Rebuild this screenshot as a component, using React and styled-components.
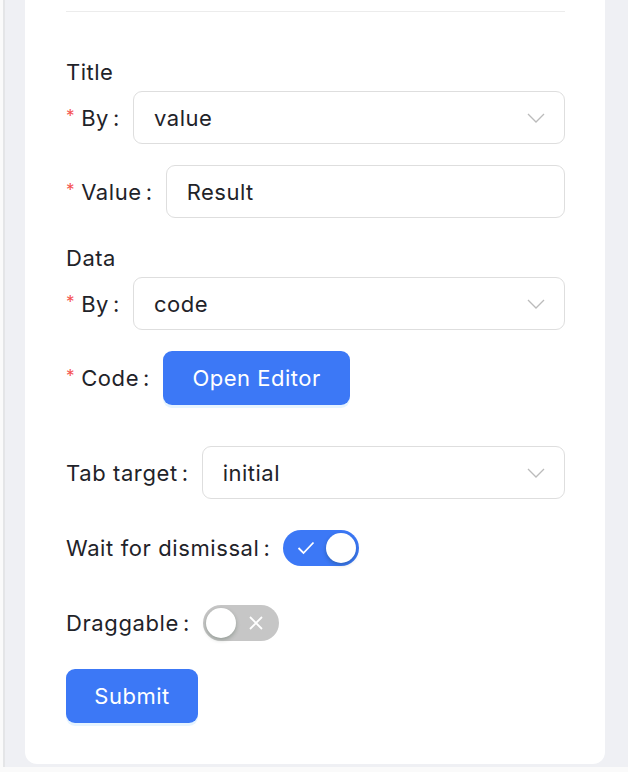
import React from "react";
import styled, { createGlobalStyle } from "styled-components";

const GlobalStyle = createGlobalStyle`
  html, body {
    margin: 0;
    padding: 0;
    background: #ffffff;
  }
  body {
    font-family: Inter, "Liberation Sans", sans-serif;
    color: #1f2329;
  }
`;

const Page = styled.div`
  width: 628px;
  height: 772px;
  padding-left: 3px;
  box-sizing: border-box;
  background: #fafafa;
`;

const Frame = styled.div`
  border-left: 2px solid #e4e5e7;
  background: #eff0f4;
  padding: 0 23px 3px 20px;
`;

const Card = styled.div`
  background: #ffffff;
  border-radius: 0 0 12px 12px;
  padding: 11px 40px 41px 41px;
  display: flex;
  flex-direction: column;
`;

const Divider = styled.div`
  height: 1px;
  background: #ececec;
  margin-bottom: 45px;
`;

const SectionTitle = styled.div`
  font-size: 22px;
  letter-spacing: 0.5px;
  line-height: 30px;
  margin-top: ${({ $top }) => $top || 0}px;
  margin-bottom: 4px;
`;

const Row = styled.div`
  display: flex;
  align-items: center;
  min-height: ${({ $h }) => $h || 53}px;
  margin-top: ${({ $top }) => $top || 0}px;
`;

const Label = styled.div`
  display: flex;
  align-items: center;
  font-size: 22px;
  letter-spacing: 0.6px;
  white-space: nowrap;
  margin-right: 13px;
`;

const Star = styled.span`
  color: #f5524f;
  font-size: 17px;
  margin-right: 6px;
  position: relative;
  top: -2px;
`;

const Colon = styled.span`
  margin-left: 4px;
`;

const Field = styled.div`
  flex: 1;
  height: 53px;
  box-sizing: border-box;
  border: 1.5px solid #dedede;
  border-radius: 9px;
  display: flex;
  align-items: center;
  justify-content: space-between;
  padding: 0 19px 0 20px;
  font-size: 22px;
  letter-spacing: 0.5px;
`;

const Chevron = () => (
  <svg width="18" height="10" viewBox="0 0 18 10" fill="none">
    <path d="M1 1 L9 9 L17 1" stroke="#bbbbbb" strokeWidth="1.3" />
  </svg>
);

const Button = styled.button`
  height: 54px;
  width: ${({ $w }) => $w}px;
  border: none;
  border-radius: 9px;
  background: #3c78f6;
  color: #ffffff;
  font-family: Inter, "Liberation Sans", sans-serif;
  font-size: 22px;
  letter-spacing: 0.5px;
  box-shadow: 0 3px 0 rgba(5, 145, 255, 0.1);
  cursor: pointer;
`;

const Toggle = styled.div`
  width: 76px;
  height: 36px;
  border-radius: 18px;
  background: ${({ $on }) => ($on ? "#3c78f6" : "#c6c6c6")};
  display: flex;
  flex-direction: ${({ $on }) => ($on ? "row" : "row-reverse")};
  align-items: center;
  justify-content: space-between;
  padding: 0 3px;
  box-sizing: border-box;
`;

const Mark = styled.div`
  width: 40px;
  display: flex;
  justify-content: center;
`;

const Knob = styled.div`
  width: 30px;
  height: 30px;
  border-radius: 50%;
  background: #ffffff;
  box-shadow: 0 2px 4px rgba(0, 35, 11, 0.25);
`;

const Check = () => (
  <svg width="18" height="14" viewBox="0 0 18 14" fill="none">
    <path d="M1.5 7 L6.5 12 L16.5 1.5" stroke="#fff" strokeWidth="1.8" />
  </svg>
);

const Cross = () => (
  <svg width="14" height="14" viewBox="0 0 14 14" fill="none">
    <path d="M1 1 L13 13 M13 1 L1 13" stroke="#fff" strokeWidth="1.8" />
  </svg>
);

const Switch = ({ on }) => (
  <Toggle $on={on}>
    <Mark>{on ? <Check /> : <Cross />}</Mark>
    <Knob />
  </Toggle>
);

const FieldLabel = ({ required, children }) => (
  <Label>
    {required && <Star>*</Star>}
    {children}
    <Colon>:</Colon>
  </Label>
);

export default function App() {
  return (
    <>
      <GlobalStyle />
      <Page>
        <Frame>
          <Card>
            <Divider />
            <SectionTitle>Title</SectionTitle>
            <Row>
              <FieldLabel required>By</FieldLabel>
              <Field>
                value
                <Chevron />
              </Field>
            </Row>
            <Row $top={21}>
              <FieldLabel required>Value</FieldLabel>
              <Field>Result</Field>
            </Row>
            <SectionTitle $top={25}>Data</SectionTitle>
            <Row>
              <FieldLabel required>By</FieldLabel>
              <Field>
                code
                <Chevron />
              </Field>
            </Row>
            <Row $top={21} $h={54}>
              <FieldLabel required>Code</FieldLabel>
              <Button $w={187}>Open Editor</Button>
            </Row>
            <Row $top={41}>
              <FieldLabel>Tab target</FieldLabel>
              <Field>
                initial
                <Chevron />
              </Field>
            </Row>
            <Row $top={22}>
              <FieldLabel>Wait for dismissal</FieldLabel>
              <Switch on />
            </Row>
            <Row $top={22}>
              <FieldLabel>Draggable</FieldLabel>
              <Switch />
            </Row>
            <Row $top={20} $h={54}>
              <Button $w={132}>Submit</Button>
            </Row>
          </Card>
        </Frame>
      </Page>
    </>
  );
}
